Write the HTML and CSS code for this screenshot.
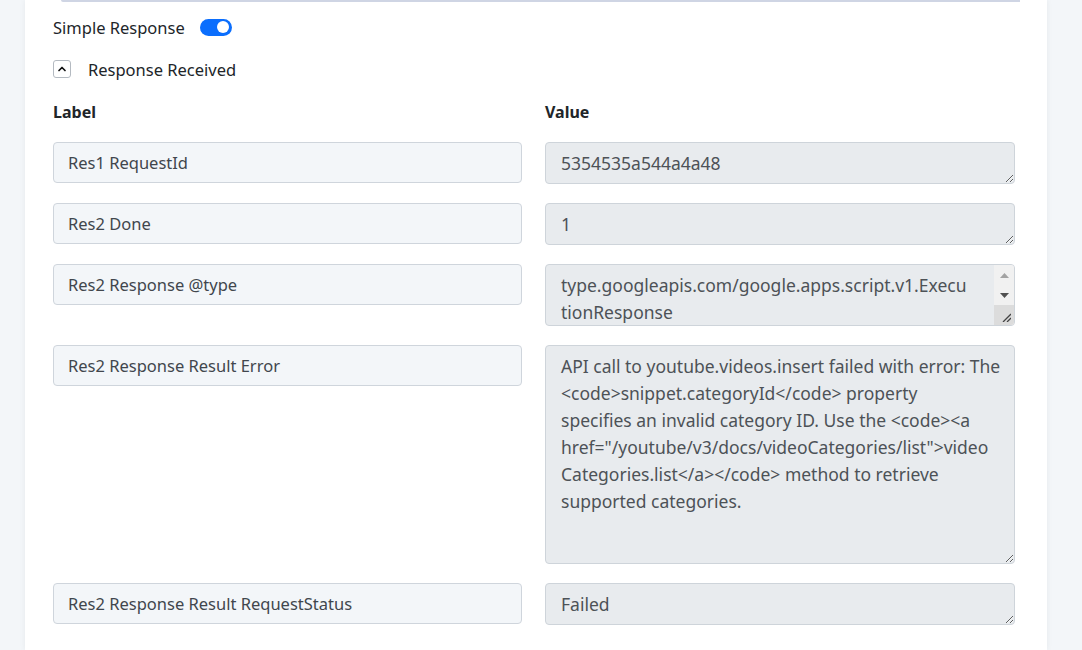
FILE: index.html
```html
<!DOCTYPE html>
<html lang="en">
<head>
    <meta charset="UTF-8">
    <meta name="viewport" content="width=device-width, initial-scale=1.0">
    <title>Response Received</title>
    <link rel="stylesheet" href="styles.css">
</head>
<body>
    <div class="card">
        <div class="prev-field"></div>
        <div class="switch-row">
            <span>Simple Response</span>
            <span class="switch"><span class="knob"></span></span>
        </div>
        <div class="collapse-row">
            <span class="collapse-btn">
                <svg width="10" height="10" viewBox="0 0 10 10"><path d="M2 6.5 L5 3.5 L8 6.5" fill="none" stroke="#111" stroke-width="1.7" stroke-linecap="round" stroke-linejoin="round"/></svg>
            </span>
            <span>Response Received</span>
        </div>
        <div class="grid">
            <div class="head">Label</div>
            <div class="head">Value</div>

            <input class="label-input" type="text" value="Res1 RequestId">
            <textarea class="value" wrap="off" readonly>5354535a544a4a48</textarea>

            <input class="label-input" type="text" value="Res2 Done">
            <textarea class="value" wrap="off" readonly>1</textarea>

            <input class="label-input" type="text" value="Res2 Response @type">
            <div class="scroll-wrap">
                <textarea class="value tall" wrap="off" readonly>type.googleapis.com/google.apps.script.v1.Execu
tionResponse</textarea>
                <div class="fake-scroll">
                    <span class="scroll-btn">
                        <svg width="9" height="5" viewBox="0 0 9 5"><path d="M0 5 L4.5 0 L9 5 Z" fill="#a3a3a3"/></svg>
                    </span>
                    <span class="scroll-btn">
                        <svg width="9" height="5" viewBox="0 0 9 5"><path d="M0 0 L4.5 5 L9 0 Z" fill="#505050"/></svg>
                    </span>
                    <span class="scroll-corner">
                        <svg width="9" height="9" viewBox="0 0 9 9"><path d="M1 9 L9 1 M5 9 L9 5" stroke="#444" stroke-width="1.3"/></svg>
                    </span>
                </div>
            </div>

            <input class="label-input" type="text" value="Res2 Response Result Error">
            <textarea class="value huge" wrap="off" readonly>API call to youtube.videos.insert failed with error: The
&lt;code&gt;snippet.categoryId&lt;/code&gt; property
specifies an invalid category ID. Use the &lt;code&gt;&lt;a
href="/youtube/v3/docs/videoCategories/list"&gt;video
Categories.list&lt;/a&gt;&lt;/code&gt; method to retrieve
supported categories.</textarea>

            <input class="label-input" type="text" value="Res2 Response Result RequestStatus">
            <textarea class="value" wrap="off" readonly>Failed</textarea>
        </div>
    </div>
</body>
</html>
```

FILE: styles.css
```css
body {
    background: #f3f6f9;
    font-family: "Noto Sans", "Open Sans", sans-serif;
    font-size: 16.5px;
    color: #212529;
    margin: 0;
    padding: 0 35px 0 25px;
    height: 650px;
    overflow: hidden;
}
.card {
    background: #fff;
    padding: 0 32px 0 28px;
    min-height: 650px;
    box-shadow: 0 0 6px rgba(0, 0, 0, 0.06);
}
.prev-field {
    height: 0;
    margin: 0 -5px 0 8px;
    border-bottom: 2px solid #cfd5e4;
    border-bottom-left-radius: 4px;
}
.switch-row {
    display: flex;
    align-items: center;
    margin-top: 13px;
    height: 24px;
}
.switch {
    position: relative;
    width: 32px;
    height: 17px;
    margin-left: 15px;
    background: #0b6efd;
    border-radius: 9px;
}
.knob {
    position: absolute;
    right: 3px;
    top: 2.5px;
    width: 12px;
    height: 12px;
    border-radius: 50%;
    background: #fff;
}
.collapse-row {
    display: flex;
    align-items: center;
    margin-top: 18px;
    height: 24px;
}
.collapse-btn {
    display: flex;
    align-items: center;
    justify-content: center;
    width: 16px;
    height: 16px;
    border: 1px solid #b4bac1;
    border-radius: 3px;
    margin-right: 17px;
}
.grid {
    display: grid;
    grid-template-columns: 469px 470px;
    column-gap: 23px;
    row-gap: 19px;
    margin-top: 19px;
    align-items: start;
}
.head {
    font-size: 16px;
    font-weight: bold;
    line-height: 24px;
    margin-bottom: -1px;
}
.label-input {
    box-sizing: border-box;
    height: 41px;
    padding: 0 14px;
    font-family: inherit;
    font-size: 16.5px;
    color: #41464d;
    background: #f3f6f9;
    border: 1px solid #cfd5dc;
    border-radius: 4px;
    outline: none;
}
.value {
    box-sizing: border-box;
    display: block;
    width: 470px;
    height: 42px;
    padding: 7px 15px 6px;
    font-family: inherit;
    font-size: 17.5px;
    line-height: 27px;
    color: #4d5257;
    background: #e8ebee;
    border: 1px solid #ced4da;
    border-radius: 4px;
    overflow: hidden;
    outline: none;
}
.value.tall {
    height: 62px;
}
.value.huge {
    height: 219px;
}
.scroll-wrap {
    position: relative;
}
.fake-scroll {
    position: absolute;
    top: 1px;
    right: 1px;
    bottom: 1px;
    width: 20px;
    display: flex;
    flex-direction: column;
    background: #f1f1f1;
    border-radius: 0 3px 3px 0;
    overflow: hidden;
}
.scroll-btn {
    height: 20px;
    display: flex;
    align-items: center;
    justify-content: center;
}
.scroll-corner {
    flex: 1;
    background: #dcdcdc;
    display: flex;
    align-items: flex-end;
    justify-content: flex-end;
    padding: 0 3px 3px 0;
}
.scroll-corner svg {
    display: block;
}
```
